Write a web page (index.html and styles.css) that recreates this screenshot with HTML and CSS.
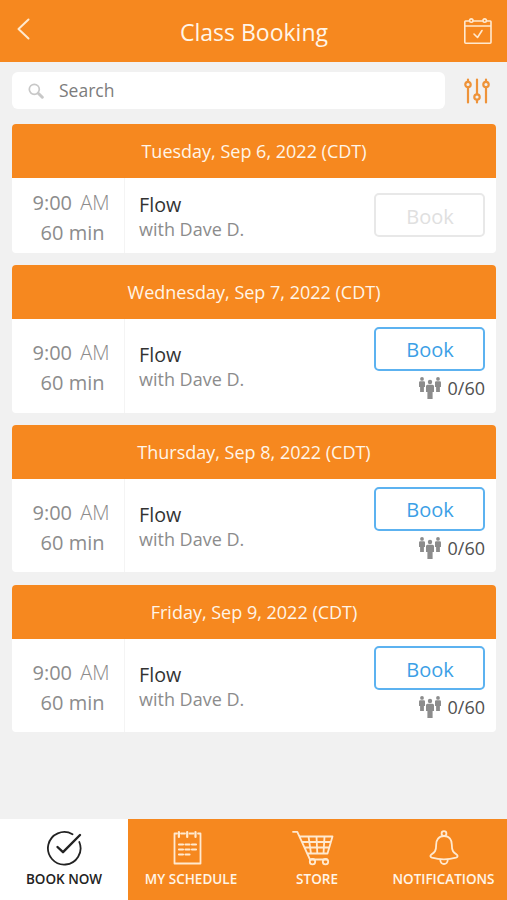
FILE: index.html
```
<!DOCTYPE html>
<html lang="en">
<head>
    <meta charset="UTF-8">
    <meta name="viewport" content="width=device-width, initial-scale=1.0">
    <title>Class Booking</title>
    <link rel="stylesheet" href="styles.css">
</head>
<body>
    <!-- shared icons -->
    <svg class="sprite" width="0" height="0">
        <symbol id="people" viewBox="0 0 22 22">
            <g id="person">
                <circle cx="3" cy="1.900" r="1.900"/>
                <path d="M1.200 4.200h3.600q1.200 0 1.200 1.200v4.600H4.900v5H1.100v-5H0V5.400q0-1.200 1.200-1.200z"/>
            </g>
            <use href="#person" x="16"/>
            <circle cx="11" cy="5" r="2.200"/>
            <path d="M8.500 7.800h5q1.500 0 1.500 1.500v5.700h-1.400V22H8.400v-7H7V9.300q0-1.500 1.500-1.500z"/>
        </symbol>
    </svg>

    <div class="app">
        <header class="header">
            <svg class="back" width="13" height="22" viewBox="0 0 13 22">
                <path d="M11.500 1.500L1.500 11L11.500 20.500"/>
            </svg>
            <h1>Class Booking</h1>
            <svg class="calendar" width="28" height="28" viewBox="0 0 28 28">
                <path d="M5 4H1.500Q.8 4 .8 4.700V25.200q0 1 1 1H26q1 0 1-1V4.700Q27 4 26.300 4H23M9.500 4h9M1 9h26M10 17l3.500 3.500L18 13.500"/>
                <circle cx="7.300" cy="3.600" r="1.700"/>
                <circle cx="20.700" cy="3.600" r="1.700"/>
            </svg>
        </header>

        <div class="search-row">
            <div class="search">
                <svg width="16" height="16" viewBox="0 0 16 16">
                    <circle cx="6.300" cy="6.300" r="5"/>
                    <path class="handle" d="M10.500 10.500L14.300 14.200"/>
                </svg>
                <span>Search</span>
            </div>
            <svg class="filter" width="26" height="26" viewBox="0 0 26 26">
                <path d="M4 1.500v2M4 9.500V24.500M13 1.500v14.500M13 22v2.500M22 1.500v2M22 9.500V24.500"/>
                <circle cx="4" cy="6.500" r="2.700"/>
                <circle cx="13" cy="19" r="2.700"/>
                <circle cx="22" cy="6.500" r="2.700"/>
            </svg>
        </div>

        <main class="list">
            <section class="card card-closed">
                <h2>Tuesday, Sep 6, 2022 (CDT)</h2>
                <div class="card-body">
                    <div class="time">
                        <div>9:00 <span class="ampm">AM</span></div>
                        <div>60 min</div>
                    </div>
                    <div class="info">
                        <div class="name">Flow</div>
                        <div class="teacher">with Dave D.</div>
                    </div>
                    <div class="action">
                        <button class="book" disabled>Book</button>
                    </div>
                </div>
            </section>

            <section class="card">
                <h2>Wednesday, Sep 7, 2022 (CDT)</h2>
                <div class="card-body">
                    <div class="time">
                        <div>9:00 <span class="ampm">AM</span></div>
                        <div>60 min</div>
                    </div>
                    <div class="info">
                        <div class="name">Flow</div>
                        <div class="teacher">with Dave D.</div>
                    </div>
                    <div class="action">
                        <button class="book">Book</button>
                        <div class="spots"><svg width="22" height="22"><use href="#people"/></svg>0/60</div>
                    </div>
                </div>
            </section>

            <section class="card">
                <h2>Thursday, Sep 8, 2022 (CDT)</h2>
                <div class="card-body">
                    <div class="time">
                        <div>9:00 <span class="ampm">AM</span></div>
                        <div>60 min</div>
                    </div>
                    <div class="info">
                        <div class="name">Flow</div>
                        <div class="teacher">with Dave D.</div>
                    </div>
                    <div class="action">
                        <button class="book">Book</button>
                        <div class="spots"><svg width="22" height="22"><use href="#people"/></svg>0/60</div>
                    </div>
                </div>
            </section>

            <section class="card">
                <h2>Friday, Sep 9, 2022 (CDT)</h2>
                <div class="card-body">
                    <div class="time">
                        <div>9:00 <span class="ampm">AM</span></div>
                        <div>60 min</div>
                    </div>
                    <div class="info">
                        <div class="name">Flow</div>
                        <div class="teacher">with Dave D.</div>
                    </div>
                    <div class="action">
                        <button class="book">Book</button>
                        <div class="spots"><svg width="22" height="22"><use href="#people"/></svg>0/60</div>
                    </div>
                </div>
            </section>
        </main>

        <nav class="tabs">
            <a class="tab active">
                <svg width="36" height="36" viewBox="0 0 36 36">
                    <path d="M26.500 4.200A16.300 16.300 0 1 0 33.300 12"/>
                    <path class="tick" d="M11.500 17l5.500 5.200L34 5"/>
                </svg>
                <span>BOOK NOW</span>
            </a>
            <a class="tab schedule">
                <svg width="36" height="36" viewBox="0 0 36 36">
                    <path d="M8 3.500H5.500V33.500H31.500V3.500H29M12 3.500h4M20.500 3.500h4"/>
                    <path class="lines" d="M9.900 2v5M18.200 2v5M26.500 2v5M10 14.500h4M16.500 14.500h4M23 14.500h4M10 19.500h4M16.500 19.500h4M23 19.500h4M10 24.500h4M16.500 24.500h4"/>
                </svg>
                <span>MY SCHEDULE</span>
            </a>
            <a class="tab store">
                <svg width="42" height="36" viewBox="0 0 42 36">
                    <path d="M1 1.800h4.300L18 29.500M8 6.500H40.500L35.500 23.500H15.500M10.500 12H39M13 17.500h24.300M16.500 6.500l2.500 17M24.500 6.500l.8 17M32.500 6.500l-1 17M18 29.500H35"/>
                    <circle cx="20.500" cy="31.700" r="2.700"/>
                    <circle cx="33.500" cy="31.700" r="2.700"/>
                </svg>
                <span>STORE</span>
            </a>
            <a class="tab notifications">
                <svg width="36" height="36" viewBox="0 0 36 36">
                    <circle cx="18" cy="3.500" r="2.400"/>
                    <path d="M18 6C12.500 6 10.200 10 10.200 14.500C10.200 21.500 8.500 22.500 5.200 24.700Q3.300 26.700 6 27.600Q18 31 30 27.600Q32.700 26.700 30.800 24.700C27.500 22.500 25.800 21.500 25.800 14.500C25.800 10 23.500 6 18 6z"/>
                    <path d="M14.300 30a3.700 4 0 0 0 7.400 0"/>
                </svg>
                <span>NOTIFICATIONS</span>
            </a>
        </nav>
    </div>
</body>
</html>
```
FILE: styles.css
```
* {
    margin: 0;
    padding: 0;
    box-sizing: border-box;
}
body {
    background-color: #f1f1f1;
    font-family: "Open Sans", "Noto Sans", sans-serif;
    color: #8c8c8c;
}
svg {
    fill: none;
    stroke-linecap: round;
    stroke-linejoin: round;
    flex-shrink: 0;
}
.sprite {
    display: block;
}
.app {
    height: 900px;
    display: flex;
    flex-direction: column;
}

/* header */
.header {
    height: 61.5px;
    padding: 0 16px 0 17px;
    display: grid;
    grid-template-columns: 28px 1fr 28px;
    background-color: #f6881f;
    color: #fff5e8;
}
.header h1 {
    font-size: 23px;
    font-weight: 400;
    line-height: 64px;
    text-align: center;
}
.header svg {
    stroke: #ffe9cf;
    stroke-width: 1.6;
}
.header .back {
    margin-top: 18px;
    stroke-width: 2;
}
.header .calendar {
    margin: 17px 0 0 1px;
}

/* search */
.search-row {
    display: flex;
    align-items: center;
    justify-content: space-between;
    padding: 10.5px 17px 0 12px;
}
.search {
    width: 433px;
    height: 37px;
    padding-left: 16px;
    display: flex;
    align-items: center;
    gap: 15px;
    border-radius: 6px;
    background-color: #fff;
    font-size: 17.5px;
    line-height: 35px;
    color: #7c7c7c;
}
.search span {
    padding-bottom: 1px;
}
.search svg {
    stroke: #c8c8c8;
    stroke-width: 1.7;
}
.search .handle {
    stroke-width: 3;
}
.filter {
    stroke: #ee9339;
    stroke-width: 2.2;
}

/* class list */
.list {
    flex: 1;
    padding: 14.75px 11px 0 12px;
    display: flex;
    flex-direction: column;
    gap: 12.25px;
}
.card {
    border-radius: 4px;
    overflow: hidden;
    background-color: #fff;
}
.card h2 {
    height: 54px;
    line-height: 54px;
    font-size: 18px;
    font-weight: 400;
    text-align: center;
    background-color: #f6881f;
    color: #fff5e8;
}
.card-body {
    height: 93.5px;
    display: flex;
    align-items: center;
}
.card-closed .card-body {
    height: 75px;
}
.time {
    width: 113px;
    height: 100%;
    padding: 5px 14.5px 0 0;
    display: flex;
    flex-direction: column;
    justify-content: center;
    align-items: flex-end;
    border-right: 1px solid #f4f4f4;
    font-size: 20px;
    line-height: 30px;
}
.time div + div {
    padding-right: 5px;
}
.time .ampm {
    margin-left: 3px;
    font-weight: 300;
}
.info {
    flex: 1;
    padding: 3px 0 0 14px;
    line-height: 25px;
}
.info .name {
    font-size: 19.7px;
    color: #333;
}
.info .teacher {
    font-size: 18px;
}
.action {
    width: 111px;
    margin-right: 11px;
}
.card:not(.card-closed) .action {
    padding-bottom: 4px;
}
.book {
    display: block;
    width: 111px;
    height: 44px;
    padding: 2px 0 0 1px;
    border: 2px solid #5cb2f0;
    border-radius: 5px;
    background-color: #fff;
    font-family: inherit;
    font-size: 20px;
    color: #3c9fe6;
}
.book:disabled {
    border-color: #e8e8e8;
    color: #e0e0e0;
}
.spots {
    margin-top: 4px;
    display: flex;
    justify-content: flex-end;
    align-items: center;
    gap: 7px;
    font-size: 18px;
    line-height: 26px;
    color: #505050;
}
.spots svg {
    fill: #8c8c8c;
}

/* bottom tabs */
.tabs {
    height: 81.5px;
    display: grid;
    grid-template-columns: 128px 126px 126px 127px;
    background-color: #f6881f;
}
.tab {
    padding-top: 11px;
    display: flex;
    flex-direction: column;
    align-items: center;
    gap: 4px;
    font-size: 13.5px;
    font-weight: 600;
    line-height: 18px;
    color: #fff5e8;
}
.tab svg {
    stroke: #ffe9cf;
    stroke-width: 1.8;
}
.tab.active {
    background-color: #fff;
    color: #222;
}
.tab.active svg {
    stroke: #222;
}
.tab.active .tick {
    stroke-width: 2.4;
}
.tab.schedule svg {
    margin-left: -8px;
}
.tab.schedule .lines {
    stroke-width: 2.2;
}
.tab.store svg {
    margin-left: -8px;
}
```
